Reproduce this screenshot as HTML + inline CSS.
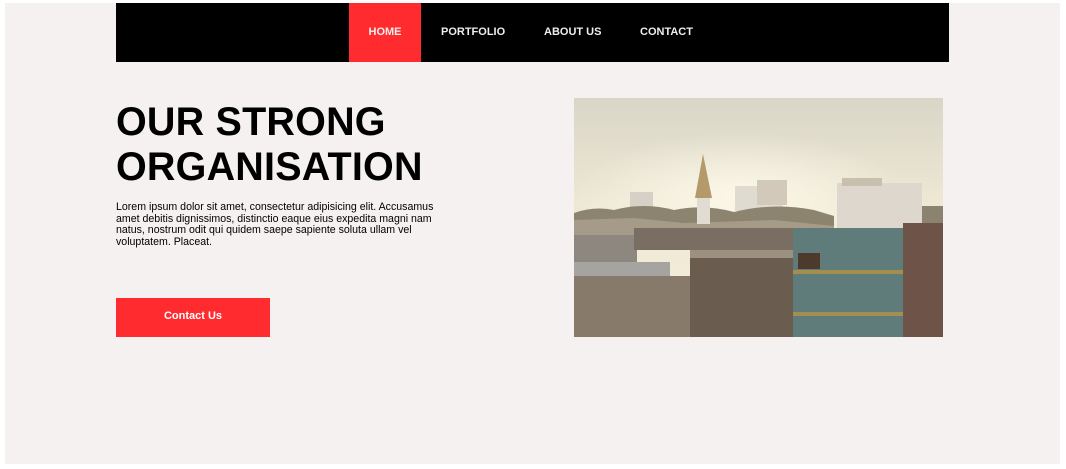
<!DOCTYPE html>
<html><head><meta charset="utf-8"><style>
*{margin:0;padding:0;box-sizing:border-box}
body{width:1066px;height:469px;background:#fff;font-family:"Liberation Sans",Arial,sans-serif;position:relative;overflow:hidden}
.panel{position:absolute;left:5px;top:3px;width:1055px;height:461px;background:#f5f1f0}
.nav{position:absolute;left:116px;top:3px;width:833px;height:59px;background:#000}
.nav a{position:absolute;top:1px;height:58px;line-height:57px;color:#eee;font-size:11px;font-weight:bold;text-decoration:none}
.home{left:233px;width:72px;background:#ff2b2f;text-align:center;top:0!important;height:59px!important;line-height:59px!important}
h1{position:absolute;left:116px;top:100px;font-size:39.5px;line-height:45px;font-weight:bold;color:#000;letter-spacing:0.2px}
p{position:absolute;left:116px;top:202px;width:325px;font-size:10.6px;line-height:11.7px;color:#000}
.btn{position:absolute;left:116px;top:298px;width:154px;height:39px;background:#ff2b2f;color:#fff;font-size:11px;font-weight:bold;text-align:center;line-height:36px}
svg{position:absolute;left:574px;top:98px}
</style></head><body>
<div class="panel"></div>
<div class="nav">
<a class="home" href="#">HOME</a>
<a href="#" style="left:325px">PORTFOLIO</a>
<a href="#" style="left:428px">ABOUT US</a>
<a href="#" style="left:524px">CONTACT</a>
</div>
<h1>OUR STRONG<br>ORGANISATION</h1>
<p>Lorem ipsum dolor sit amet, consectetur adipisicing elit. Accusamus amet debitis dignissimos, distinctio eaque eius expedita magni nam natus, nostrum odit qui quidem saepe sapiente soluta ullam vel voluptatem. Placeat.</p>
<div class="btn">Contact Us</div>
<svg width="369" height="239" viewBox="0 0 369 239">
<defs>
<linearGradient id="sky" x1="0" y1="0" x2="0" y2="1">
<stop offset="0" stop-color="#d9d6c8"/><stop offset="0.45" stop-color="#eee8d4"/><stop offset="1" stop-color="#f4eedb"/>
</linearGradient>
<radialGradient id="sun" cx="0.45" cy="0.7" r="0.45">
<stop offset="0" stop-color="#fdf9ea" stop-opacity="0.95"/><stop offset="1" stop-color="#fdf9ea" stop-opacity="0"/>
</radialGradient>
</defs>
<rect width="369" height="239" fill="url(#sky)"/>
<rect width="369" height="140" fill="url(#sun)"/>
<rect x="56" y="94" width="23" height="25" fill="#d6d0c6"/>
<rect x="161" y="88" width="48" height="25" fill="#e0dbd0"/>
<rect x="183" y="82" width="30" height="25" fill="#d2c9ba"/>
<path d="M0 115 Q20 108 40 112 Q70 104 100 112 Q130 106 160 114 Q200 104 240 112 L260 118 L260 140 L0 140Z" fill="#8c846e"/>
<path d="M0 122 L60 120 L110 125 L200 122 L260 128 L260 140 L0 140Z" fill="#a59b88"/>
<path d="M129 56 L121 100 L138 100Z" fill="#b49a6a"/>
<rect x="123" y="100" width="13" height="26" fill="#e1dcd1"/>
<rect x="0" y="137" width="63" height="30" fill="#8d8780"/>
<rect x="60" y="130" width="160" height="22" fill="#7a6e62"/>
<rect x="0" y="164" width="96" height="32" fill="#a6a4a0"/>
<rect x="0" y="178" width="116" height="61" fill="#877a6a"/>
<rect x="116" y="152" width="103" height="87" fill="#6a5c4e"/>
<rect x="116" y="152" width="103" height="8" fill="#9c9080"/>
<rect x="263" y="85" width="85" height="115" fill="#ddd7cd"/>
<rect x="268" y="80" width="40" height="8" fill="#c9bfae"/>
<rect x="219" y="130" width="110" height="109" fill="#5f7c7b"/>
<rect x="219" y="172" width="110" height="4" fill="#a38e52"/>
<rect x="219" y="214" width="110" height="4" fill="#a38e52"/>
<rect x="224" y="155" width="22" height="16" fill="#4e3a2c"/>
<rect x="329" y="125" width="40" height="114" fill="#6e5348"/>
<rect x="348" y="108" width="21" height="17" fill="#8b8270"/>
</svg>
</body></html>
